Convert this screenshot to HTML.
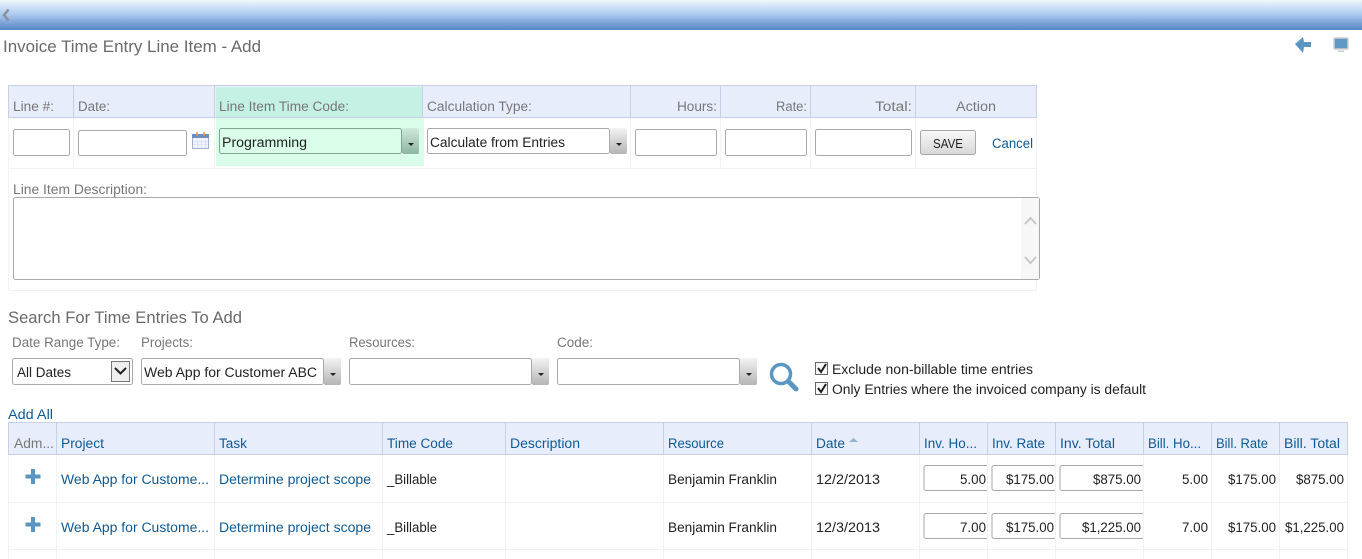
<!DOCTYPE html>
<html lang="en"><head><meta charset="utf-8"><title>Invoice Time Entry Line Item - Add</title>
<style>
html,body{margin:0;padding:0;background:#fff;overflow:hidden}
svg{display:block}
text{font-family:"Liberation Sans",sans-serif;font-size:13.5px;fill:#222}
.g{fill:#777}.b{fill:#0f5a94}.h{font-size:16.5px;fill:#6a6a6a}
.i{fill:#fff;stroke:#a9a9a9}
.l{stroke:#c9cfe6;fill:none}.r{stroke:#f2f2f2;fill:none}
</style></head><body>
<svg width="1362" height="559" viewBox="0 0 1362 559" xmlns="http://www.w3.org/2000/svg">
<defs>
<linearGradient id="top" x1="0" y1="0" x2="0" y2="1"><stop offset="0" stop-color="#f0f7fe"/><stop offset=".45" stop-color="#b0cef1"/><stop offset="1" stop-color="#5684c4"/></linearGradient>
<linearGradient id="btn" x1="0" y1="0" x2="0" y2="1"><stop offset="0" stop-color="#f3f3f3"/><stop offset="1" stop-color="#b4b4b4"/></linearGradient>
<linearGradient id="gbtn" x1="0" y1="0" x2="0" y2="1"><stop offset="0" stop-color="#cfe9dc"/><stop offset="1" stop-color="#8fb5a2"/></linearGradient>
<linearGradient id="sv" x1="0" y1="0" x2="0" y2="1"><stop offset="0" stop-color="#f8f8f8"/><stop offset="1" stop-color="#d8d8d8"/></linearGradient>
<g id="dd"><path d="M0 0h6l-3 3z" fill="#222"/></g>
</defs>

<!-- top bar -->
<rect width="1362" height="30" fill="url(#top)"/>
<path d="M8.500 9.500 4 15l4.500 5.500" fill="none" stroke="#8a8f98" stroke-width="2.400"/>
<text class="h" x="3" y="52" textLength="258" lengthAdjust="spacingAndGlyphs">Invoice Time Entry Line Item - Add</text>
<path d="M1295 44l8-7 1 5h7v5h-7l-1 6z" fill="#5a96c2"/>
<rect x="1334" y="38" width="14" height="11" rx="1" fill="#5d99c4" stroke="#d0d0d0" stroke-width="1.500"/>
<rect x="1338" y="50.500" width="6" height="1.500" fill="#ccc"/>

<!-- form header -->
<rect x="8.500" y="85.500" width="1028" height="32" fill="#e8edfb" stroke="#c9cfe6"/>
<rect x="216" y="87" width="207" height="30" fill="#c5f0e4"/>
<rect x="216" y="118" width="208" height="48" fill="#d9fde9"/>
<path class="l" d="M73.500 86v31M214.500 86v31M422.500 86v31M630.500 86v31M720.500 86v31M810.500 86v31M915.500 86v31"/>
<path class="r" d="M8.500 118v172M73.500 118v50M214.500 118v50M630.500 118v50M720.500 118v50M810.500 118v50M915.500 118v50M1036.500 118v172M9 168.500h1028M9 290.500h1028"/>
<text class="g" x="13" y="111" textLength="41" lengthAdjust="spacingAndGlyphs">Line #:</text>
<text class="g" x="78" y="111" textLength="32" lengthAdjust="spacingAndGlyphs">Date:</text>
<text class="g" x="219" y="111" textLength="130" lengthAdjust="spacingAndGlyphs">Line Item Time Code:</text>
<text class="g" x="427" y="111" textLength="105" lengthAdjust="spacingAndGlyphs">Calculation Type:</text>
<text class="g" x="677" y="111" textLength="40" lengthAdjust="spacingAndGlyphs">Hours:</text>
<text class="g" x="776" y="111" textLength="31" lengthAdjust="spacingAndGlyphs">Rate:</text>
<text class="g" x="875" y="111" textLength="37" lengthAdjust="spacingAndGlyphs">Total:</text>
<text class="g" x="956" y="111" textLength="40" lengthAdjust="spacingAndGlyphs">Action</text>

<!-- form row -->
<rect class="i" x="13.500" y="129.500" width="56" height="26" rx="2"/>
<rect class="i" x="78.500" y="130.500" width="108" height="25" rx="2"/>
<rect x="192.500" y="134.500" width="16" height="14" fill="#f0f3fa" stroke="#9fb0d0"/>
<rect x="192" y="134" width="17" height="4" fill="#6f8dbd"/>
<path d="M197 132v4M204 132v4" stroke="#e39a50" stroke-width="1.500"/>
<path d="M193 141.500h15M193 144.500h15M197.500 139v9M201.500 139v9M205.500 139v9" stroke="#dfe5f0" fill="none"/>

<rect x="402" y="128" width="17" height="26" rx="2" fill="url(#gbtn)"/>
<rect x="219.500" y="128.500" width="182" height="25" rx="2" fill="#d9fde9" stroke="#7fa58f"/>
<use href="#dd" x="408" y="143"/>
<text x="222" y="147" textLength="85" lengthAdjust="spacingAndGlyphs">Programming</text>

<rect x="610" y="128" width="17" height="26" rx="2" fill="url(#btn)"/>
<rect class="i" x="427.500" y="128.500" width="182" height="25" rx="2"/>
<use href="#dd" x="616" y="143"/>
<text x="430" y="147" textLength="135" lengthAdjust="spacingAndGlyphs">Calculate from Entries</text>

<rect class="i" x="635.500" y="129.500" width="81" height="26" rx="2"/>
<rect class="i" x="725.500" y="129.500" width="81" height="26" rx="2"/>
<rect class="i" x="815.500" y="129.500" width="96" height="26" rx="2"/>
<rect x="920.500" y="130.500" width="55" height="24" rx="2" fill="url(#sv)" stroke="#a9a9a9"/>
<text x="933" y="148" style="font-size:12.500px" textLength="30" lengthAdjust="spacingAndGlyphs">SAVE</text>
<text class="b" x="992" y="148" textLength="41" lengthAdjust="spacingAndGlyphs">Cancel</text>

<text class="g" x="13" y="194" textLength="134" lengthAdjust="spacingAndGlyphs">Line Item Description:</text>
<rect class="i" x="13.500" y="197.500" width="1026" height="82" rx="2"/>
<rect x="1021" y="198" width="18" height="81" fill="#f7f7f7"/>
<path d="M1025 224l5.500-6 5.500 6M1025 257l5.500 6 5.500-6" fill="none" stroke="#c8c8c8" stroke-width="2"/>

<!-- search -->
<text class="h" x="8" y="323" textLength="234" lengthAdjust="spacingAndGlyphs">Search For Time Entries To Add</text>
<text class="g" x="12" y="347" textLength="108" lengthAdjust="spacingAndGlyphs">Date Range Type:</text>
<text class="g" x="141" y="347" textLength="52" lengthAdjust="spacingAndGlyphs">Projects:</text>
<text class="g" x="349" y="347" textLength="66" lengthAdjust="spacingAndGlyphs">Resources:</text>
<text class="g" x="557" y="347" textLength="36" lengthAdjust="spacingAndGlyphs">Code:</text>

<rect class="i" x="12.500" y="358.500" width="120" height="26" rx="2"/>
<rect x="111.500" y="361.500" width="18" height="20" fill="#eee" stroke="#777"/>
<path d="M115 368l5.500 5.500 5.500-5.500" fill="none" stroke="#222" stroke-width="2"/>
<text x="17" y="377" textLength="54" lengthAdjust="spacingAndGlyphs">All Dates</text>

<rect x="324" y="358" width="17" height="27" rx="2" fill="url(#btn)"/>
<rect class="i" x="141.500" y="358.500" width="182" height="26" rx="2"/>
<use href="#dd" x="330" y="373"/>
<text x="144" y="377" textLength="173" lengthAdjust="spacingAndGlyphs">Web App for Customer ABC</text>

<rect x="532" y="358" width="17" height="27" rx="2" fill="url(#btn)"/>
<rect class="i" x="349.500" y="358.500" width="182" height="26" rx="2"/>
<use href="#dd" x="538" y="373"/>

<rect x="740" y="358" width="17" height="27" rx="2" fill="url(#btn)"/>
<rect class="i" x="557.500" y="358.500" width="182" height="26" rx="2"/>
<use href="#dd" x="746" y="373"/>

<circle cx="781" cy="374" r="9.500" fill="none" stroke="#5a96c2" stroke-width="3.500"/>
<path d="M789 382l7 7" stroke="#5a96c2" stroke-width="5" stroke-linecap="round"/>

<rect x="815.500" y="362.500" width="12" height="12" fill="#f6f6f6" stroke="#666"/>
<path d="M818 368l3 4 5-8" fill="none" stroke="#222" stroke-width="2"/>
<text x="832" y="374" textLength="201" lengthAdjust="spacingAndGlyphs">Exclude non-billable time entries</text>
<rect x="815.500" y="382.500" width="12" height="12" fill="#f6f6f6" stroke="#666"/>
<path d="M818 388l3 4 5-8" fill="none" stroke="#222" stroke-width="2"/>
<text x="832" y="394" textLength="314" lengthAdjust="spacingAndGlyphs">Only Entries where the invoiced company is default</text>

<text class="b" x="8" y="419" textLength="45" lengthAdjust="spacingAndGlyphs">Add All</text>

<!-- grid -->
<rect x="8.500" y="422.500" width="1339" height="32" fill="#e8edfb" stroke="#c9cfe6"/>
<path class="l" d="M56.500 423v31M214.500 423v31M382.500 423v31M505.500 423v31M663.500 423v31M811.500 423v31M919.500 423v31M987.500 423v31M1055.500 423v31M1143.500 423v31M1211.500 423v31M1279.500 423v31"/>
<path class="r" d="M8.500 455v104M56.500 455v104M214.500 455v104M382.500 455v104M505.500 455v104M663.500 455v104M811.500 455v104M919.500 455v104M987.500 455v104M1055.500 455v104M1143.500 455v104M1211.500 455v104M1279.500 455v104M1347.500 455v104M9 502.500h1339M9 549.500h1339"/>
<text class="g" x="14" y="448" textLength="40" lengthAdjust="spacingAndGlyphs">Adm...</text>
<text class="b" x="61" y="448" textLength="43" lengthAdjust="spacingAndGlyphs">Project</text>
<text class="b" x="219" y="448" textLength="28" lengthAdjust="spacingAndGlyphs">Task</text>
<text class="b" x="387" y="448" textLength="66" lengthAdjust="spacingAndGlyphs">Time Code</text>
<text class="b" x="510" y="448" textLength="70" lengthAdjust="spacingAndGlyphs">Description</text>
<text class="b" x="668" y="448" textLength="56" lengthAdjust="spacingAndGlyphs">Resource</text>
<text class="b" x="816" y="448" textLength="29" lengthAdjust="spacingAndGlyphs">Date</text>
<path d="M849 442l4.500-4 4.500 4z" fill="#8fb2d0"/>
<text class="b" x="924" y="448" textLength="53" lengthAdjust="spacingAndGlyphs">Inv. Ho...</text>
<text class="b" x="992" y="448" textLength="53" lengthAdjust="spacingAndGlyphs">Inv. Rate</text>
<text class="b" x="1060" y="448" textLength="55" lengthAdjust="spacingAndGlyphs">Inv. Total</text>
<text class="b" x="1148" y="448" textLength="53" lengthAdjust="spacingAndGlyphs">Bill. Ho...</text>
<text class="b" x="1216" y="448" textLength="52" lengthAdjust="spacingAndGlyphs">Bill. Rate</text>
<text class="b" x="1284" y="448" textLength="56" lengthAdjust="spacingAndGlyphs">Bill. Total</text>

<!-- row 1 -->
<path d="M33 469v15M25.500 476.500h15" stroke="#5a96c2" stroke-width="4"/>
<text class="b" x="61" y="484" textLength="148" lengthAdjust="spacingAndGlyphs">Web App for Custome...</text>
<text class="b" x="219" y="484" textLength="152" lengthAdjust="spacingAndGlyphs">Determine project scope</text>
<text x="387" y="484" textLength="50" lengthAdjust="spacingAndGlyphs">_Billable</text>
<text x="668" y="484" textLength="109" lengthAdjust="spacingAndGlyphs">Benjamin Franklin</text>
<text x="816" y="484" textLength="64" lengthAdjust="spacingAndGlyphs">12/2/2013</text>
<path class="i" d="M987 465.500h-61a2 2 0 0 0-2 2v21a2 2 0 0 0 2 2h61M1055 465.500h-61a2 2 0 0 0-2 2v21a2 2 0 0 0 2 2h61M1143 465.500h-81a2 2 0 0 0-2 2v21a2 2 0 0 0 2 2h81"/>
<text x="960" y="484" textLength="26" lengthAdjust="spacingAndGlyphs">5.00</text>
<text x="1006" y="484" textLength="48" lengthAdjust="spacingAndGlyphs">$175.00</text>
<text x="1093" y="484" textLength="48" lengthAdjust="spacingAndGlyphs">$875.00</text>
<text x="1182" y="484" textLength="26" lengthAdjust="spacingAndGlyphs">5.00</text>
<text x="1228" y="484" textLength="48" lengthAdjust="spacingAndGlyphs">$175.00</text>
<text x="1296" y="484" textLength="48" lengthAdjust="spacingAndGlyphs">$875.00</text>

<!-- row 2 -->
<path d="M33 517v15M25.500 524.500h15" stroke="#5a96c2" stroke-width="4"/>
<text class="b" x="61" y="532" textLength="148" lengthAdjust="spacingAndGlyphs">Web App for Custome...</text>
<text class="b" x="219" y="532" textLength="152" lengthAdjust="spacingAndGlyphs">Determine project scope</text>
<text x="387" y="532" textLength="50" lengthAdjust="spacingAndGlyphs">_Billable</text>
<text x="668" y="532" textLength="109" lengthAdjust="spacingAndGlyphs">Benjamin Franklin</text>
<text x="816" y="532" textLength="64" lengthAdjust="spacingAndGlyphs">12/3/2013</text>
<path class="i" d="M987 513.500h-61a2 2 0 0 0-2 2v21a2 2 0 0 0 2 2h61M1055 513.500h-61a2 2 0 0 0-2 2v21a2 2 0 0 0 2 2h61M1143 513.500h-81a2 2 0 0 0-2 2v21a2 2 0 0 0 2 2h81"/>
<text x="960" y="532" textLength="26" lengthAdjust="spacingAndGlyphs">7.00</text>
<text x="1006" y="532" textLength="48" lengthAdjust="spacingAndGlyphs">$175.00</text>
<text x="1082" y="532" textLength="59" lengthAdjust="spacingAndGlyphs">$1,225.00</text>
<text x="1182" y="532" textLength="26" lengthAdjust="spacingAndGlyphs">7.00</text>
<text x="1228" y="532" textLength="48" lengthAdjust="spacingAndGlyphs">$175.00</text>
<text x="1285" y="532" textLength="59" lengthAdjust="spacingAndGlyphs">$1,225.00</text>
</svg>
</body></html>
